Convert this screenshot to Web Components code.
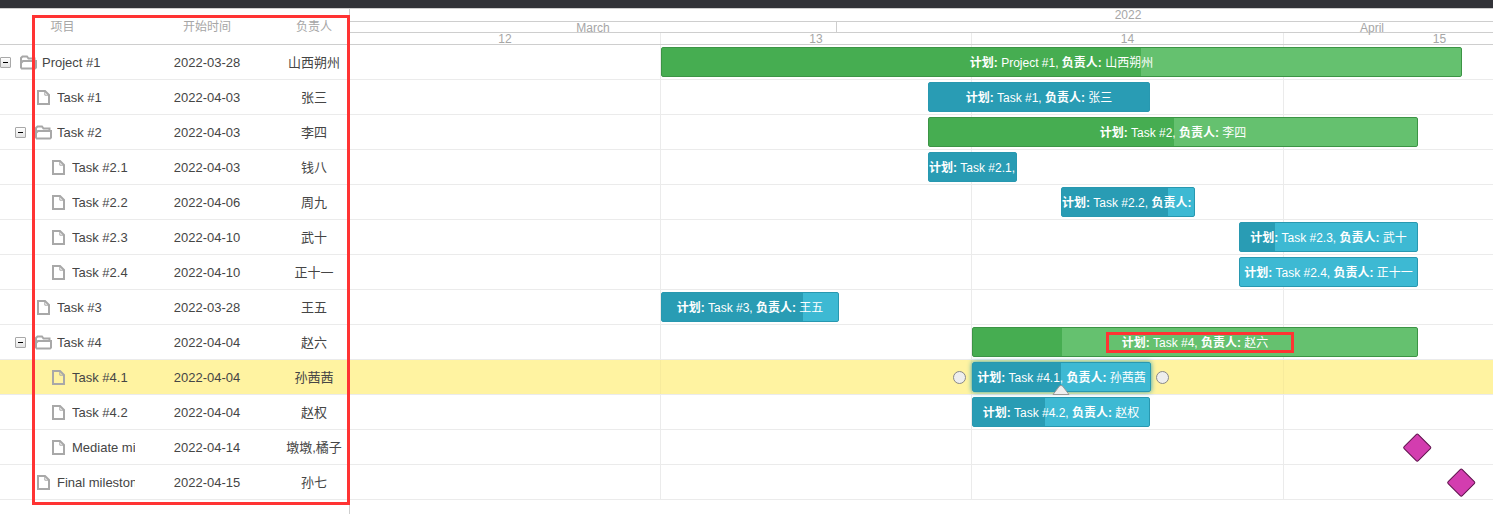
<!DOCTYPE html>
<html>
<head>
<meta charset="utf-8">
<style>
  html, body { margin:0; height:100%; }
  body { font-family:"Liberation Sans","Noto Sans CJK SC",sans-serif; overflow:hidden; }
</style>
</head>
<body>
<gantt-app>
  <gantt-grid>
    <grid-row kind="folder" level="0" date="2022-03-28" owner="山西朔州">Project #1</grid-row>
    <grid-row kind="file" level="1" date="2022-04-03" owner="张三">Task #1</grid-row>
    <grid-row kind="folder" level="1" date="2022-04-03" owner="李四">Task #2</grid-row>
    <grid-row kind="file" level="2" date="2022-04-03" owner="钱八">Task #2.1</grid-row>
    <grid-row kind="file" level="2" date="2022-04-06" owner="周九">Task #2.2</grid-row>
    <grid-row kind="file" level="2" date="2022-04-10" owner="武十">Task #2.3</grid-row>
    <grid-row kind="file" level="2" date="2022-04-10" owner="正十一">Task #2.4</grid-row>
    <grid-row kind="file" level="1" date="2022-03-28" owner="王五">Task #3</grid-row>
    <grid-row kind="folder" level="1" date="2022-04-04" owner="赵六">Task #4</grid-row>
    <grid-row kind="file" level="2" date="2022-04-04" owner="孙茜茜" selected>Task #4.1</grid-row>
    <grid-row kind="file" level="2" date="2022-04-04" owner="赵权">Task #4.2</grid-row>
    <grid-row kind="file" level="2" date="2022-04-14" owner="墩墩,橘子">Mediate milestone</grid-row>
    <grid-row kind="file" level="1" date="2022-04-15" owner="孙七">Final milestone</grid-row>
  </gantt-grid>
  <gantt-chart>
    <chart-row><gantt-bar type="project" x="661" w="801" p="479"><b>计划:</b> Project #1, <b>负责人:</b> 山西朔州</gantt-bar></chart-row>
    <chart-row><gantt-bar x="928" w="222" p="222"><b>计划:</b> Task #1, <b>负责人:</b> 张三</gantt-bar></chart-row>
    <chart-row><gantt-bar type="project" x="928" w="490" p="245"><b>计划:</b> Task #2, <b>负责人:</b> 李四</gantt-bar></chart-row>
    <chart-row><gantt-bar x="928" w="89" p="89"><b>计划:</b> Task #2.1, <b>负责人:</b> 钱八</gantt-bar></chart-row>
    <chart-row><gantt-bar x="1061" w="134" p="106"><b>计划:</b> Task #2.2, <b>负责人:</b> 周九</gantt-bar></chart-row>
    <chart-row><gantt-bar x="1239" w="179" p="35"><b>计划:</b> Task #2.3, <b>负责人:</b> 武十</gantt-bar></chart-row>
    <chart-row><gantt-bar x="1239" w="179" p="0"><b>计划:</b> Task #2.4, <b>负责人:</b> 正十一</gantt-bar></chart-row>
    <chart-row><gantt-bar x="661" w="178" p="141"><b>计划:</b> Task #3, <b>负责人:</b> 王五</gantt-bar></chart-row>
    <chart-row><gantt-bar type="project" x="972" w="446" p="89"><b>计划:</b> Task #4, <b>负责人:</b> 赵六</gantt-bar></chart-row>
    <chart-row selected><gantt-bar x="972" w="179" p="88" selected><b>计划:</b> Task #4.1, <b>负责人:</b> 孙茜茜</gantt-bar></chart-row>
    <chart-row><gantt-bar x="972" w="178" p="72"><b>计划:</b> Task #4.2, <b>负责人:</b> 赵权</gantt-bar></chart-row>
    <chart-row><gantt-milestone x="1417.5"></gantt-milestone></chart-row>
    <chart-row><gantt-milestone x="1461.5"></gantt-milestone></chart-row>
  </gantt-chart>
  <mark-box style="left:32px;top:15px;width:318px;height:490px;--w:3px"></mark-box>
  <mark-box style="left:1106px;top:332px;width:188px;height:21px;--w:3px"></mark-box>
</gantt-app>

<script>
const CHART_LEFT = 350;

class GanttApp extends HTMLElement {
  connectedCallback() {
    this.attachShadow({ mode: "open" }).innerHTML = `
      <style>
        :host { display:block; position:relative; height:514px; overflow:hidden; background:#fff; color:#454545; }
        .top { height:8px; background:#323338; border-bottom:1px solid #cecece; }
        .main { display:flex; height:505px; }
      </style>
      <div class="top"></div>
      <div class="main"><slot></slot></div>`;
  }
}

class GanttGrid extends HTMLElement {
  connectedCallback() {
    this.attachShadow({ mode: "open" }).innerHTML = `
      <style>
        :host { display:block; flex:none; width:349px; border-right:1px solid #cecece; }
        .head { display:grid; grid-template-columns:135px 144px 70px; height:35px; line-height:36px;
                border-bottom:1px solid #cecece; font-size:12px; color:#a6a6a6; text-align:center; }
        .head div:first-child { padding-right:10px; }
      </style>
      <div class="head"><div>项目</div><div>开始时间</div><div>负责人</div></div>
      <slot></slot>`;
  }
}

class GridRow extends HTMLElement {
  connectedCallback() {
    const folder = this.getAttribute("kind") == "folder";
    const level = +this.getAttribute("level");
    const icon = folder
      ? `<svg width="17" height="15" viewBox="0 0 17 15" fill="none" stroke="#a8a8a8" stroke-width="2">
           <path d="M1 13.5V3L2.5 1.5H7L8.5 3.5H14.5V6"/><path d="M1 8L3 6H16V12.5L15 13.5H1"/></svg>`
      : `<svg width="13" height="15" viewBox="0 0 13 15" fill="none" stroke="#a8a8a8" stroke-width="2">
           <path d="M1 1H8L12 5V14H1Z"/><path d="M7.8 1V5.2H12" stroke-width="1"/></svg>`;
    this.attachShadow({ mode: "open" }).innerHTML = `
      <style>
        :host { display:grid; grid-template-columns:135px 144px 70px; height:34px; line-height:35px;
                border-bottom:1px solid #ebebeb; font-size:13px; white-space:nowrap; }
        :host([selected]) { background:#fff3a1; }
        .tree { display:flex; align-items:center; overflow:hidden; }
        .indent { flex:none; width:${level * 15}px; }
        .exp { flex:none; width:19px; }
        .box { display:flex; align-items:center; justify-content:center; box-sizing:border-box; width:11px; height:11px;
               border:1px solid #a8a8a8; border-radius:1px; background:linear-gradient(#fff,#e2e2e2); }
        .box i { display:block; width:5px; height:1px; background:#000; }
        .icon { flex:none; display:flex; width:23px; box-sizing:border-box; padding-left:${folder ? 1 : 3}px; }
        .name { overflow:hidden; }
        .cell { text-align:center; overflow:hidden; }
      </style>
      <div class="tree">
        <span class="indent"></span>
        <span class="exp">${folder ? '<div class="box"><i></i></div>' : ""}</span>
        <span class="icon">${icon}</span>
        <span class="name"><slot></slot></span>
      </div>
      <div class="cell">${this.getAttribute("date")}</div>
      <div class="cell">${this.getAttribute("owner")}</div>`;
  }
}

class GanttChart extends HTMLElement {
  connectedCallback() {
    this.attachShadow({ mode: "open" }).innerHTML = `
      <style>
        :host { display:block; flex:1; min-width:0; overflow:hidden; font-size:12px; color:#a6a6a6; }
        .scale { display:flex; box-sizing:border-box; border-bottom:1px solid #cecece; text-align:center; white-space:nowrap; }
        .scale div { flex:none; box-sizing:border-box; border-right:1px solid #cecece; height:100%; }
        .y { height:13px; line-height:12px; }
        .m { height:11px; line-height:12px; }
        .d { height:12px; line-height:13px; }
        .d div { border-right-color:#ebebeb; }
        .y div { border-right:0; }
      </style>
      <div class="scale y"><div style="width:1556px">2022</div></div>
      <div class="scale m"><div style="width:487px">March</div><div style="width:1070px;border:0">April</div></div>
      <div class="scale d">
        <div style="width:311px">12</div><div style="width:311px">13</div>
        <div style="width:312px">14</div><div style="width:311px;border:0">15</div>
      </div>
      <slot></slot>`;
  }
}

class ChartRow extends HTMLElement {
  connectedCallback() {
    this.attachShadow({ mode: "open" }).innerHTML = `
      <style>
        :host { --line:#ebebeb; display:flex; align-items:center; height:34px; border-bottom:1px solid #ebebeb;
                background-image:linear-gradient(var(--line),var(--line)),linear-gradient(var(--line),var(--line)),linear-gradient(var(--line),var(--line));
                background-size:1px 100%; background-repeat:no-repeat; background-position:310px 0,621px 0,933px 0; }
        :host([selected]) { --line:#f7eb9c; background-color:#fff3a1; }
      </style>
      <slot></slot>`;
  }
}

class GanttBar extends HTMLElement {
  connectedCallback() {
    const project = this.getAttribute("type") == "project";
    const [fill, edge, done] = project ? ["#65c16f", "#3c9445", "#46ad51"] : ["#3db9d3", "#2898b0", "#299cb4"];
    const x = +this.getAttribute("x") - CHART_LEFT;
    const w = +this.getAttribute("w");
    const p = +this.getAttribute("p");
    this.attachShadow({ mode: "open" }).innerHTML = `
      <style>
        :host { display:block; flex:none; position:relative; box-sizing:border-box; margin-left:${x}px; width:${w}px; height:30px;
                border:1px solid ${edge}; border-radius:2px; color:#fff; font-size:12px; line-height:30px; text-align:center;
                background:linear-gradient(to right,${done} ${p}px,${fill} ${p}px); background-origin:padding-box; }
        :host([selected]) { box-shadow:0 0 5px #299cb4; }
        .text { overflow:hidden; white-space:nowrap; height:28px; }
        .h { position:absolute; top:8px; width:13px; height:13px; box-sizing:border-box; border:1px solid #888; border-radius:50%; background:#eee; }
        svg { position:absolute; top:21px; }
      </style>
      <div class="text"><slot></slot></div>
      ${this.hasAttribute("selected") ? `
        <div class="h" style="left:-20px"></div>
        <div class="h" style="right:-19px"></div>
        <svg style="left:${p - 9}px" width="18" height="11" viewBox="0 0 18 11"><path d="M1 10.5L7.5 2Q9 .8 10.5 2L17 10.5Z" fill="#eee" stroke="#999"/></svg>` : ""}`;
  }
}

class GanttMilestone extends HTMLElement {
  connectedCallback() {
    const x = +this.getAttribute("x") - CHART_LEFT - 10.25;
    this.attachShadow({ mode: "open" }).innerHTML = `
      <style>
        :host { display:block; flex:none; box-sizing:border-box; margin:1px 0 0 ${x}px; width:20.5px; height:20.5px;
                background:#d33daf; border:1px solid #61164f; border-radius:2px; transform:rotate(45deg); }
      </style>`;
  }
}

class MarkBox extends HTMLElement {
  connectedCallback() {
    this.attachShadow({ mode: "open" }).innerHTML = `
      <style>
        :host { display:block; position:absolute; box-sizing:border-box; border:var(--w) solid #f33; pointer-events:none; }
      </style>`;
  }
}

customElements.define("gantt-app", GanttApp);
customElements.define("gantt-grid", GanttGrid);
customElements.define("grid-row", GridRow);
customElements.define("gantt-chart", GanttChart);
customElements.define("chart-row", ChartRow);
customElements.define("gantt-bar", GanttBar);
customElements.define("gantt-milestone", GanttMilestone);
customElements.define("mark-box", MarkBox);
</script>
</body>
</html>
